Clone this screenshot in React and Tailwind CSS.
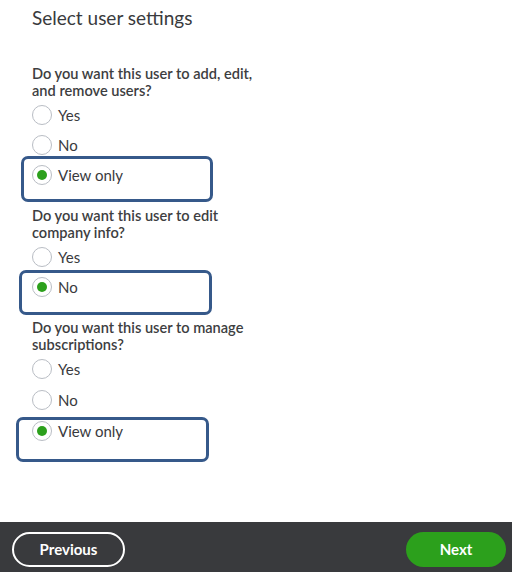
import React, { useState } from "react";

const questions = [
  {
    id: "users",
    text: ["Do you want this user to add, edit,", "and remove users?"],
    options: ["Yes", "No", "View only"],
    selected: "View only",
    box: "-left-[11px] -top-[19px] w-[192px] h-[46px]",
  },
  {
    id: "company",
    text: ["Do you want this user to edit", "company info?"],
    options: ["Yes", "No"],
    selected: "No",
    box: "-left-[13px] -top-[17px] w-[193px] h-[45px]",
  },
  {
    id: "subs",
    text: ["Do you want this user to manage", "subscriptions?"],
    options: ["Yes", "No", "View only"],
    selected: "View only",
    box: "-left-[16px] -top-[14px] w-[193px] h-[45px]",
  },
];

const Radio = ({ checked }) => (
  <span className="w-5 h-5 rounded-full border border-[#b9bdc4] bg-white flex items-center justify-center shrink-0">
    {checked && <span className="w-[10px] h-[10px] rounded-full bg-[#2ca01c]" />}
  </span>
);

const App = () => {
  const [answers, setAnswers] = useState(
    Object.fromEntries(questions.map((q) => [q.id, q.selected]))
  );

  return (
    <div className="w-[512px] h-[572px] bg-white flex flex-col text-[#393a3d] font-['Lato','Liberation_Sans',sans-serif]">
      <div className="flex-1 pl-[32px] pt-[6px]">
        <h1 className="text-[19px] leading-[24px] text-[#393a3d]">Select user settings</h1>

        <div className="mt-[35px] flex flex-col gap-[17px]">
          {questions.map((q) => (
            <div key={q.id}>
              <p className="text-[14.6px] leading-[17px] font-semibold text-[#3d3e41]">
                {q.text[0]}
                <br />
                {q.text[1]}
              </p>
              <div className="mt-[1px] flex flex-col">
                {q.options.map((opt, i) => (
                  <label
                    key={opt}
                    onClick={() => setAnswers({ ...answers, [q.id]: opt })}
                    className={`relative flex items-center gap-[6px] text-[15px] cursor-pointer ${
                      q.id === "subs" && i > 0 ? "h-[31.5px]" : "h-[30px]"
                    }`}
                  >
                    <Radio checked={answers[q.id] === opt} />
                    <span>{opt}</span>
                    {opt === q.selected && (
                      <span className="absolute top-1/2 left-0 pointer-events-none">
                        <span className={`absolute border-[3px] border-[#36598a] rounded-[7px] ${q.box}`} />
                      </span>
                    )}
                  </label>
                ))}
              </div>
            </div>
          ))}
        </div>
      </div>

      <div className="h-[50px] bg-[#393a3d] flex items-start justify-between pt-[10px] pl-[12px] pr-[6px]">
        <button className="w-[113px] h-[35px] rounded-full border-2 border-white text-white text-[15px] font-bold">
          Previous
        </button>
        <button className="w-[100px] h-[35px] rounded-full bg-[#2ca01c] text-white text-[15px] font-bold">
          Next
        </button>
      </div>
    </div>
  );
};

export default App;
